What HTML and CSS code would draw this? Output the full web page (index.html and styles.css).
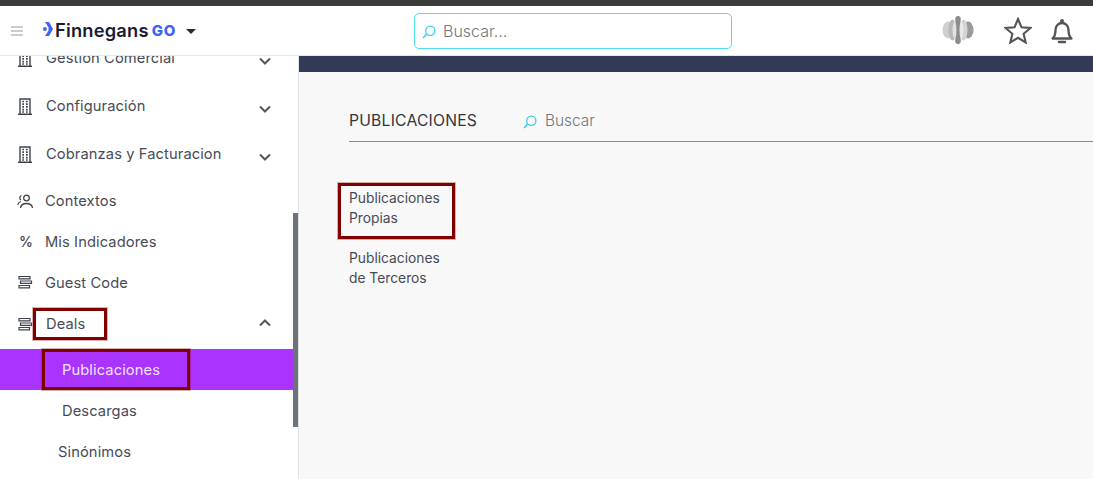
FILE: index.html
```html
<!DOCTYPE html>
<html lang="es">
<head>
<meta charset="utf-8">
<title>Publicaciones</title>
<link rel="stylesheet" href="styles.css">
</head>
<body>
<svg class="defs" width="0" height="0" aria-hidden="true">
  <symbol id="building" viewBox="0 0 14 17">
    <path d="M2 16V1h10v15M0 16.200h14" fill="none" stroke="currentColor" stroke-width="1.400"/>
    <path d="M4.300 3.500h1.700M8 3.500h1.700M4.300 6.200h1.700M8 6.200h1.700M4.300 8.900h1.700M8 8.900h1.700M4.300 11.600h1.700M8 11.600h1.700M4.300 14h1.700M8 14h1.700" stroke="currentColor" stroke-width="1.700" fill="none"/>
  </symbol>
  <symbol id="chev" viewBox="0 0 12 8">
    <path d="M1 1.500l5 5 5-5" fill="none" stroke="currentColor" stroke-width="2"/>
  </symbol>
  <symbol id="lines" viewBox="0 0 18 15">
    <path d="M2 1.500h11v2.400H2zM3.500 6h11v2.400h-11zM2 10.500h10.500v2.400H2z" fill="none" stroke="currentColor" stroke-width="1.200"/>
  </symbol>
  <symbol id="search" viewBox="0 0 14 14">
    <circle cx="8.300" cy="5.700" r="4.600" fill="none" stroke="currentColor" stroke-width="1.300"/>
    <path d="M4.800 9L1 13" fill="none" stroke="currentColor" stroke-width="1.500"/>
  </symbol>
</svg>
<div class="topbar"></div>
<header class="header">
  <div class="brand">
    <svg class="burger" viewBox="0 0 12 10" aria-hidden="true"><path d="M0 1h12M0 5h12M0 9h12" stroke="#9a9a9a" stroke-width="1.100"/></svg>
    <svg class="logo-mark" viewBox="0 0 10 14" aria-hidden="true"><path d="M2 0H6l4 7-4 7H2l3.500-5.200V5.200z" fill="#3d63f0"/><circle cx="1.900" cy="7" r="1.900" fill="#3d63f0"/></svg>
    <span class="logo-name">Finnegans</span><span class="logo-go">GO</span>
    <span class="caret"></span>
  </div>
  <label class="top-search">
    <svg class="search-icon"><use href="#search"/></svg>
    <span>Buscar...</span>
  </label>
  <div class="actions">
    <svg class="blob" viewBox="0 0 32 28" aria-hidden="true">
      <ellipse cx="6" cy="14" rx="5.500" ry="8.500" fill="#cfcfcf"/>
      <ellipse cx="26" cy="14" rx="5.500" ry="8.500" fill="#9a9a9a"/>
      <ellipse cx="10.500" cy="14" rx="4" ry="10.500" fill="#b9b9b9"/>
      <ellipse cx="21.500" cy="14" rx="4" ry="10.500" fill="#d4d4d4"/>
      <ellipse cx="13" cy="14" rx="2.500" ry="8.500" fill="#e2e2e2"/>
      <ellipse cx="19" cy="14" rx="2.500" ry="8.500" fill="#e8e8e8"/>
      <path d="M16 0c2.500 0 3.300 2.500 2.600 5-.8 3-1.100 6-1.100 9s.3 6 1.100 9c.7 2.500-.1 5-2.600 5s-3.300-2.500-2.600-5c.8-3 1.100-6 1.100-9s-.3-6-1.100-9C12.700 2.500 13.500 0 16 0z" fill="#8c8c8c"/>
    </svg>
    <svg class="star" viewBox="0 0 28 27" aria-hidden="true"><path d="M14 2l3.500 8.300 8.900.7-6.800 5.800 2.100 8.700L14 20.800 6.300 25.500l2.100-8.700L1.600 11l8.900-.7z" fill="none" stroke="#555" stroke-width="2.100"/></svg>
    <svg class="bell" viewBox="0 0 22 26" aria-hidden="true"><path d="M1.500 20.500c2.300-2 3-3.500 3-8.500 0-4 2.800-7 6.500-7s6.500 3 6.500 7c0 5 .7 6.500 3 8.500z" fill="none" stroke="#555" stroke-width="2.300" stroke-linejoin="round"/><circle cx="11" cy="3" r="2" fill="#555"/><path d="M8 24h6" stroke="#555" stroke-width="2.400" stroke-linecap="round"/></svg>
  </div>
</header>
<div class="layout">
  <aside class="sidebar">
    <ul class="menu">
      <li class="item tall"><svg class="ic-building"><use href="#building"/></svg><span class="label">Gestión Comercial</span><svg class="chev"><use href="#chev"/></svg></li>
      <li class="item tall"><svg class="ic-building"><use href="#building"/></svg><span class="label">Configuración</span><svg class="chev"><use href="#chev"/></svg></li>
      <li class="item tall last-tall"><svg class="ic-building"><use href="#building"/></svg><span class="label">Cobranzas y Facturacion</span><svg class="chev"><use href="#chev"/></svg></li>
      <li class="item ctx"><svg class="ic-small" viewBox="0 0 18 15" aria-hidden="true"><circle cx="9.500" cy="4" r="2.800" fill="none" stroke="currentColor" stroke-width="1.300"/><path d="M3.500 14c.5-3.500 3-4.500 6-4.500s5.500 1 6 4.500M.8 11c.3-2 1.300-3 3-3.500M4.500 1.500a2.500 2.500 0 0 0-.5 4.500" fill="none" stroke="currentColor" stroke-width="1.300"/></svg><span class="label">Contextos</span></li>
      <li class="item"><span class="ic-small pct">%</span><span class="label">Mis Indicadores</span></li>
      <li class="item"><svg class="ic-small"><use href="#lines"/></svg><span class="label">Guest Code</span></li>
      <li class="item deals"><svg class="ic-small"><use href="#lines"/></svg><span class="label">Deals</span><svg class="chev up"><use href="#chev"/></svg><span class="mark mark-deals"></span></li>
      <li class="item sub active"><span class="label">Publicaciones</span><span class="mark mark-pub"></span></li>
      <li class="item sub"><span class="label">Descargas</span></li>
      <li class="item sub2"><span class="label">Sinónimos</span></li>
    </ul>
    <div class="thumb"></div>
  </aside>
  <main class="main">
    <div class="strip"></div>
    <div class="content">
      <div class="title-row">
        <h1 class="title">PUBLICACIONES</h1>
        <div class="main-search"><svg class="search-icon"><use href="#search"/></svg><span>Buscar</span></div>
      </div>
      <ul class="links">
        <li class="link">Publicaciones<br>Propias<span class="mark mark-prop"></span></li>
        <li class="link">Publicaciones<br>de Terceros</li>
      </ul>
    </div>
  </main>
</div>
</body>
</html>
```
FILE: styles.css
```css
* { box-sizing: border-box; }
html, body { margin: 0; height: 479px; overflow: hidden; }
body {
  display: flex;
  flex-direction: column;
  font-family: Inter, "Open Sans", "Liberation Sans", sans-serif;
  color: #474b57;
  background: #fff;
}
.defs { position: absolute; }
.topbar { height: 6px; background: #3b3b3b; flex: none; }
.header {
  flex: none;
  height: 50px;
  display: flex;
  align-items: center;
  background: #fff;
  border-bottom: 1px solid #e6e6e6;
}
.brand { width: 414px; display: flex; align-items: center; padding-left: 11px; }
.burger { width: 12px; height: 10px; margin-right: 20px; flex: none; }
.logo-mark { width: 10px; height: 14px; margin-top: -3px; margin-right: 2px; flex: none; }
.logo-name { font-size: 18.300px; font-weight: 600; color: #1a1b33; letter-spacing: .2px; margin-top: -2px; }
.logo-go { font-size: 15px; font-weight: 800; color: #3d63f0; margin-left: 3px; letter-spacing: .8px; }
.caret {
  margin-left: 10px;
  margin-top: 2px;
  border: 5px solid transparent;
  border-top: 5px solid #2b2b2b;
  border-bottom: 0;
}
.top-search {
  width: 318px;
  height: 36px;
  border: 1px solid #4fdcf5;
  border-radius: 5px;
  display: flex;
  align-items: center;
  padding-left: 7px;
  font-size: 16px;
  font-weight: 300;
  color: #6f767e;
}
.search-icon { width: 14px; height: 14px; color: #35cdf0; margin-right: 7px; flex: none; margin-top: 3px; }
.actions { flex: 1; display: flex; align-items: center; padding-left: 210px; }
.blob { width: 32px; height: 28px; margin-right: 30px; margin-top: -1px; }
.star { width: 28px; height: 27px; margin-right: 19px; margin-top: -1px; }
.bell { width: 22px; height: 26px; margin-top: 1px; }

.layout { flex: 1; display: flex; min-height: 0; }
.sidebar {
  position: relative;
  width: 299px;
  flex: none;
  overflow: hidden;
  border-right: 1px solid #e2e2e2;
  background: #fff;
}
.menu { list-style: none; margin: -22px 0 0; padding: 0; }
.item {
  position: relative;
  display: flex;
  align-items: center;
  height: 41px;
  font-size: 14.700px;
  padding-left: 17px;
  letter-spacing: .1px;
}
.item.tall { height: 48px; padding-left: 18px; }
.item.last-tall { height: 51px; padding-bottom: 3px; }
.item.ctx { height: 40px; }
.ic-building { width: 14px; height: 17px; margin-right: 14px; flex: none; color: #3f4350; }
.ic-small { width: 18px; height: 15px; margin-right: 10px; flex: none; color: #3f4350; }
.pct { font-size: 14px; line-height: 15px; font-weight: 500; padding-left: 2px; }
.label { flex: 1; }
.chev { width: 12px; height: 8px; margin-right: 27px; margin-top: 5px; color: #555; flex: none; }
.chev.up { transform: rotate(180deg); margin-top: -3px; }
.deals { height: 46px; padding-bottom: 4px; }
.deals .label { padding-left: 1px; }
.sub { padding-left: 62px; }
.sub2 { padding-left: 58px; }
.active { background: #a933ff; color: #f3e2ff; margin-right: 5px; }
.thumb {
  position: absolute;
  right: 0;
  top: 157px;
  width: 5px;
  height: 214px;
  background: #6c727a;
}
.mark { position: absolute; border: 3px solid #800000; box-shadow: 0 0 0 1px rgba(128,0,0,.3); }
.mark-deals { left: 33px; top: 5px; width: 74px; height: 32px; }
.mark-pub { left: 42px; top: 0; width: 148px; height: 41px; }
.mark-prop { left: -11px; top: -5px; width: 117px; height: 56px; }

.main { flex: 1; background: #f8f8f8; min-width: 0; }
.strip { height: 16px; background: #323a56; }
.content { padding: 0 0 0 50px; }
.title-row {
  display: flex;
  align-items: center;
  height: 70px;
  padding-top: 28px;
  border-bottom: 1px solid #17b6d6;
  gap: 46px;
}
.title { margin: 0; font-size: 15.700px; font-weight: 400; color: #33363d; letter-spacing: .2px; }
.main-search { display: flex; align-items: center; font-size: 15.400px; font-weight: 300; color: #6f767e; }
.main-search .search-icon { margin-right: 8px; margin-top: 2px; }
.links { list-style: none; margin: 46px 0 0; padding: 0; }
.link { position: relative; font-size: 13.800px; line-height: 20px; margin-bottom: 20px; color: #474b57; }
```
